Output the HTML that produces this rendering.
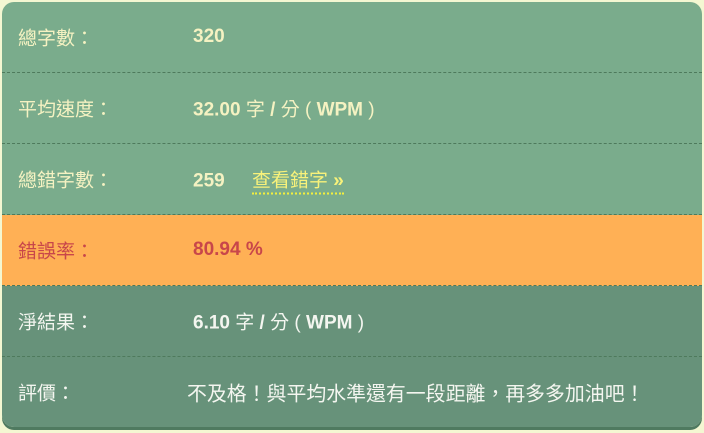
<!DOCTYPE html>
<html><head><meta charset="utf-8"><style>
body{margin:0;background:#f4f7d2;width:704px;height:433px;overflow:hidden;font-family:"Liberation Sans","Noto Sans CJK TC",sans-serif;}
.card{position:absolute;left:2px;top:2px;width:700px;height:425px;border-radius:12px;overflow:hidden;box-shadow:0 3px 0 #4f7a60;}
.r{position:relative;height:70px;border-bottom:1px dashed #4e7a5c;font-size:19px;}
.r>span{position:absolute;top:50%;transform:translateY(-50%);white-space:nowrap;}
.l{left:16px;}.v{left:191px;font-weight:bold;}
.g1{background:#7aac8c;color:#f5f2c2;}
.o{background:#ffb055;color:#c8464a;}
.g2{background:#67927a;color:#f4f6f0;}
.n{font-weight:normal}
a{color:#f8f27a;text-decoration:none;border-bottom:2px dotted #f4f03c;font-weight:normal;margin-left:22px;padding-bottom:1px}
</style></head><body>
<div class="card">
<div class="r g1"><span class="l">總字數：</span><span class="v">320</span></div>
<div class="r g1"><span class="l">平均速度：</span><span class="v">32.00 <span class="n">字</span> / <span class="n">分 (</span> WPM <span class="n">)</span></span></div>
<div class="r g1"><span class="l">總錯字數：</span><span class="v">259 <a>查看錯字 <b>»</b></a></span></div>
<div class="r o"><span class="l">錯誤率：</span><span class="v">80.94 %</span></div>
<div class="r g2"><span class="l">淨結果：</span><span class="v">6.10 <span class="n">字</span> / <span class="n">分 (</span> WPM <span class="n">)</span></span></div>
<div class="r g2" style="border-bottom:none"><span class="l">評價：</span><span class="v n" style="left:185px;font-size:19.9px">不及格！與平均水準還有一段距離，再多多加油吧！</span></div>
</div>
</body></html>
